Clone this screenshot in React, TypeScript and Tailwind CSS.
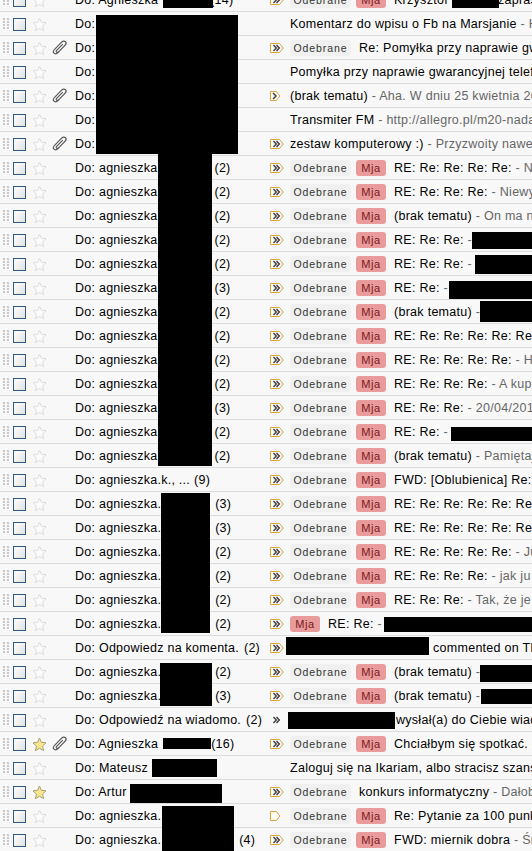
const Grip = () => (
  <svg width="6" height="14" viewBox="0 0 6 14" className="shrink-0">
    {[1, 4, 7, 10].map((y) => (
      <g key={y} fill="#c8c8c8">
        <rect x="0" y={y} width="2" height="2" />
        <rect x="4" y={y} width="2" height="2" />
      </g>
    ))}
  </svg>
);

const Check = () => (
  <span className="block h-[13px] w-[13px] shrink-0 border border-[#2c5a85] bg-gradient-to-br from-[#ffffff] to-[#e2e2dc]" />
);

const Star = ({ on }: { on: boolean }) => (
  <svg width="15" height="15" viewBox="0 0 15 15" className="shrink-0">
    <path
      d="M7.5 1 L9.4 5.3 L14 5.8 L10.6 9 L11.6 13.7 L7.5 11.3 L3.4 13.7 L4.4 9 L1 5.8 L5.6 5.3 Z"
      fill={on ? "#fbe58a" : "#fbfbfb"}
      stroke={on ? "#a8a27a" : "#dddddd"}
      strokeWidth="1"
    />
  </svg>
);

const Clip = ({ on }: { on: boolean }) =>
  on ? (
    <svg width="16" height="16" viewBox="0 0 16 16" fill="none" className="shrink-0">
      <path
        d="M14 4.2 L6 12.6 C4.6 14 2.8 14.2 1.9 13.2 C1 12.2 1.3 10.6 2.6 9.3 L9.6 2.2 C10.8 1 12.4 0.8 13.4 1.7 C14.4 2.7 14.1 4.2 13 5.3 L6.6 11.8 C5.9 12.5 5 12.6 4.5 12.1 C4 11.6 4.2 10.8 4.9 10.1 L10.8 4.2"
        stroke="#5a5a5a"
        strokeWidth="1.2"
      />
    </svg>
  ) : (
    <span className="block h-4 w-4 shrink-0" />
  );

type Mark = "none" | "double" | "single" | "empty" | "bare";

const Marker = ({ kind }: { kind: Mark }) => {
  if (kind === "none") return <span className="block h-[10px] w-[14px] shrink-0" />;
  return (
    <svg width="14" height="10" viewBox="0 0 14 10" fill="none" className="shrink-0">
      {kind === "double" && (
        <path d="M0.5 0.5 H9.5 L13.2 5 L9.5 9.5 H0.5 Z" stroke="#dba23c" strokeWidth="1" fill="#fbfbf6" />
      )}
      {(kind === "single" || kind === "empty") && (
        <path d="M0.5 0.5 H6.5 L9.8 5 L6.5 9.5 H0.5 Z" stroke="#dba23c" strokeWidth="1" fill="#fbfbf6" />
      )}
      {(kind === "double" || kind === "bare") && (
        <path d="M3.5 2 L6.3 5 L3.5 8 M6.5 2 L9.3 5 L6.5 8" stroke="#444444" strokeWidth="1.5" />
      )}
      {kind === "single" && <path d="M3 2 L6 5 L3 8" stroke="#444444" strokeWidth="1.5" />}
    </svg>
  );
};

const Odebrane = () => (
  <span className="mr-[5px] flex h-4 w-[61px] shrink-0 items-center justify-center rounded-[3px] bg-[#f0f0f0] pt-px text-[10.5px] tracking-[0.9px] text-[#333333]">
    Odebrane
  </span>
);

const Mja = () => (
  <span className="mr-2 flex h-4 w-[30px] shrink-0 items-center justify-center rounded-[3px] bg-[#e99a9a] pt-px text-[11px] tracking-[0.6px] text-[#7a1a1a]">
    Mja
  </span>
);

type Row = {
  to: string;
  count?: string;
  countClass?: string;
  star?: boolean;
  clip?: boolean;
  mark: Mark;
  o?: boolean;
  m?: boolean;
  subj: string;
  snip?: string;
  subjClass?: string;
  tail?: string;
};

const A = "agnieszka";
const A2 = "agnieszka.";
const gapA = "ml-[54px]";
const re = (
  count: string,
  subj: string,
  snip?: string,
  to = A,
  countClass = "ml-[57px]",
): Row => ({ to, count, countClass, mark: "double", o: true, m: true, subj, snip });

const rows: Row[] = [
  { to: "Agnieszka", count: "(14)", countClass: "ml-[52px]", mark: "double", o: true, m: true, subj: "Krzysztof", tail: "zapraszał" },
  { to: "", mark: "none", subj: "Komentarz do wpisu o Fb na Marsjanie", snip: " - Hej" },
  { to: "", clip: true, mark: "double", o: true, subj: "Re: Pomyłka przy naprawie gwarancyjnej" },
  { to: "", mark: "none", subj: "Pomyłka przy naprawie gwarancyjnej telefonu" },
  { to: "", clip: true, mark: "single", subj: "(brak tematu)", snip: " - Aha. W dniu 25 kwietnia 2012" },
  { to: "", mark: "none", subj: "Transmiter FM", snip: " - http://allegro.pl/m20-nadajnik" },
  { to: "", clip: true, mark: "double", subj: "zestaw komputerowy :)", snip: " - Przyzwoity nawet" },
  re("(2)", "RE: Re: Re: Re: Re:", " - Nie"),
  re("(2)", "RE: Re: Re: Re:", " - Niewygodne"),
  re("(2)", "(brak tematu)", " - On ma na"),
  re("(2)", "RE: Re: Re:", " -"),
  re("(2)", "RE: Re: Re:", " -"),
  re("(3)", "RE: Re:", " -"),
  re("(2)", "(brak tematu)", " -"),
  re("(2)", "RE: Re: Re: Re: Re: Re:"),
  re("(2)", "RE: Re: Re: Re: Re:", " - Hej"),
  re("(2)", "RE: Re: Re: Re:", " - A kupi"),
  re("(3)", "RE: Re: Re:", " - 20/04/2012"),
  re("(2)", "RE: Re:", " -"),
  re("(2)", "(brak tematu)", " - Pamiętaj"),
  re("(9)", "FWD: [Oblubienica] Re: Re:", undefined, "agnieszka.k., ...", "ml-[4px]"),
  re("(3)", "RE: Re: Re: Re: Re: Re:", undefined, A2, gapA),
  re("(3)", "RE: Re: Re: Re: Re: Re:", undefined, A2, gapA),
  re("(2)", "RE: Re: Re: Re: Re:", " - Ju", A2, gapA),
  re("(2)", "RE: Re: Re: Re:", " - jak ju", A2, gapA),
  re("(2)", "RE: Re: Re:", " - Tak, że je", A2, gapA),
  { to: A2, count: "(2)", countClass: gapA, mark: "double", m: true, subj: "RE: Re:", snip: " -" },
  { to: "Odpowiedz na komenta.", count: "(2)", countClass: "ml-[5px]", mark: "double", subj: "commented on This", subjClass: "ml-[143px]" },
  re("(2)", "(brak tematu)", " -", A2, gapA),
  re("(3)", "(brak tematu)", " -", A2, gapA),
  { to: "Odpowiedź na wiadomo.", count: "(2)", countClass: "ml-[5px]", mark: "bare", subj: "wysłał(a) do Ciebie wiadomość", subjClass: "ml-[106px]" },
  { to: "Agnieszka", count: "(16)", countClass: "ml-[53px]", star: true, clip: true, mark: "double", o: true, m: true, subj: "Chciałbym się spotkać.", snip: " - Witam" },
  { to: "Mateusz", mark: "none", subj: "Zaloguj się na Ikariam, albo stracisz szansę" },
  { to: "Artur", star: true, mark: "double", o: true, subj: "konkurs informatyczny", snip: " - Dałobyś" },
  { to: A2, mark: "empty", o: true, m: true, subj: "Re: Pytanie za 100 punktów" },
  { to: A2, count: "(4)", countClass: "ml-[78px]", mark: "double", o: true, m: true, subj: "FWD: miernik dobra", snip: " - Śmieszne" },
];

const blocks = [
  "left-[163px] top-0 h-[8px] w-[50px]",
  "left-[96px] top-[15px] h-[139px] w-[142px]",
  "left-[158px] top-[154px] h-[312px] w-[54px]",
  "left-[161px] top-[493px] h-[140px] w-[49px]",
  "left-[160px] top-[663px] h-[43px] w-[52px]",
  "left-[163px] top-[738px] h-[11px] w-[48px]",
  "left-[152px] top-[759px] h-[18px] w-[65px]",
  "left-[130px] top-[784px] h-[19px] w-[92px]",
  "left-[162px] top-[806px] h-[45px] w-[72px]",
  "left-[452px] top-0 h-[8px] w-[47px]",
  "left-[472px] top-[232px] h-[17px] w-[60px]",
  "left-[475px] top-[255px] h-[19px] w-[57px]",
  "left-[449px] top-[281px] h-[18px] w-[83px]",
  "left-[480px] top-[301px] h-[21px] w-[52px]",
  "left-[451px] top-[427px] h-[14px] w-[81px]",
  "left-[384px] top-[617px] h-[15px] w-[148px]",
  "left-[286px] top-[637px] h-[18px] w-[143px]",
  "left-[480px] top-[665px] h-[17px] w-[52px]",
  "left-[481px] top-[689px] h-[15px] w-[51px]",
  "left-[288px] top-[712px] h-[17px] w-[107px]",
];

export default function App() {
  return (
    <div className="relative h-[851px] w-[532px] overflow-hidden bg-[#f8f8f8] font-['Liberation_Sans',Arial,sans-serif] text-[12.5px] text-[#000000]">
      <div className="-mt-[12px]">
        {rows.map((r, i) => (
          <div key={i} className="flex h-6 items-center border-b border-[#dcdcdc] pl-[3px] pt-px">
            <Grip />
            <span className="ml-1" />
            <Check />
            <span className="ml-[6px]" />
            <Star on={!!r.star} />
            <span className="ml-[5px]" />
            <Clip on={!!r.clip} />
            <div className="ml-[7px] flex w-[195px] shrink-0 whitespace-pre pt-px tracking-[0.25px]">
              <span>Do: {r.to}</span>
              {r.count && <span className={r.countClass}>{r.count}</span>}
            </div>
            <Marker kind={r.mark} />
            <div className="ml-[6px] flex min-w-0 flex-1 items-center overflow-hidden whitespace-pre tracking-[0.28px]">
              {r.o && <Odebrane />}
              {r.o && !r.m && <span className="ml-[3px]" />}
              {r.m && <Mja />}
              <span className={`pt-px ${r.subjClass ?? ""}`}>{r.subj}</span>
              {r.tail && <span className="ml-[50px] pt-px">{r.tail}</span>}
              {r.snip && <span className="pt-px text-[#666666]">{r.snip}</span>}
            </div>
          </div>
        ))}
      </div>
      {blocks.map((b) => (
        <div key={b} className={`absolute bg-black ${b}`} />
      ))}
    </div>
  );
}
